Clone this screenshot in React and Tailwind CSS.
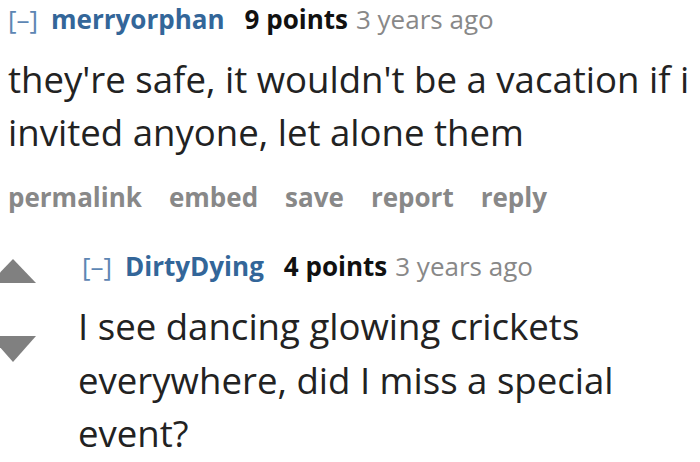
export default function App() {
  const sans = { fontFamily: '"Open Sans", "Noto Sans", sans-serif' };
  return (
    <div className="w-[700px] h-[462px] overflow-hidden bg-white relative" style={sans}>
      <div className="pl-[8px] pt-[2px]">
        <div className="flex items-baseline h-[34px] leading-[34px] text-[26px] whitespace-nowrap">
          <span className="text-[#5d86b3] font-normal">[–]</span>
          <span className="ml-[13px] font-bold text-[#336699]">merryorphan</span>
          <span className="ml-[20px] font-bold text-[#111]">9 points</span>
          <span className="ml-[8px] text-[#888]">3 years ago</span>
        </div>
        <div className="mt-[17px] text-[36.6px] leading-[53px] text-[#222] whitespace-nowrap">
          they're safe, it wouldn't be a vacation if i
          <br />
          invited anyone, let alone them
        </div>
        <div className="mt-[21px] flex gap-[27px] h-[35px] leading-[35px] text-[26px] font-bold text-[#888] whitespace-nowrap">
          <span>permalink</span>
          <span>embed</span>
          <span>save</span>
          <span>report</span>
          <span>reply</span>
        </div>
      </div>
      <div className="flex mt-[34px]">
        <div className="w-[78px] shrink-0 flex flex-col">
          <svg width="46" height="24" viewBox="0 0 46 24" className="ml-[-10px] mt-[10px]">
            <polygon points="23,0 46,24 0,24" fill="#808080" />
          </svg>
          <svg width="46" height="26" viewBox="0 0 46 26" className="ml-[-10px] mt-[53px]">
            <polygon points="0,0 46,0 23,26" fill="#808080" />
          </svg>
        </div>
        <div>
          <div className="flex items-baseline h-[35px] leading-[35px] text-[26px] whitespace-nowrap pl-[4px]">
            <span className="text-[#5d86b3]">[–]</span>
            <span className="ml-[13px] font-bold text-[#336699]">DirtyDying</span>
            <span className="ml-[20px] font-bold text-[#111]">4 points</span>
            <span className="ml-[8px] text-[#888]">3 years ago</span>
          </div>
          <div className="mt-[16px] text-[36.6px] leading-[53.5px] text-[#222] whitespace-nowrap">
            I see dancing glowing crickets
            <br />
            everywhere, did I miss a special
            <br />
            event?
          </div>
        </div>
      </div>
    </div>
  );
}
